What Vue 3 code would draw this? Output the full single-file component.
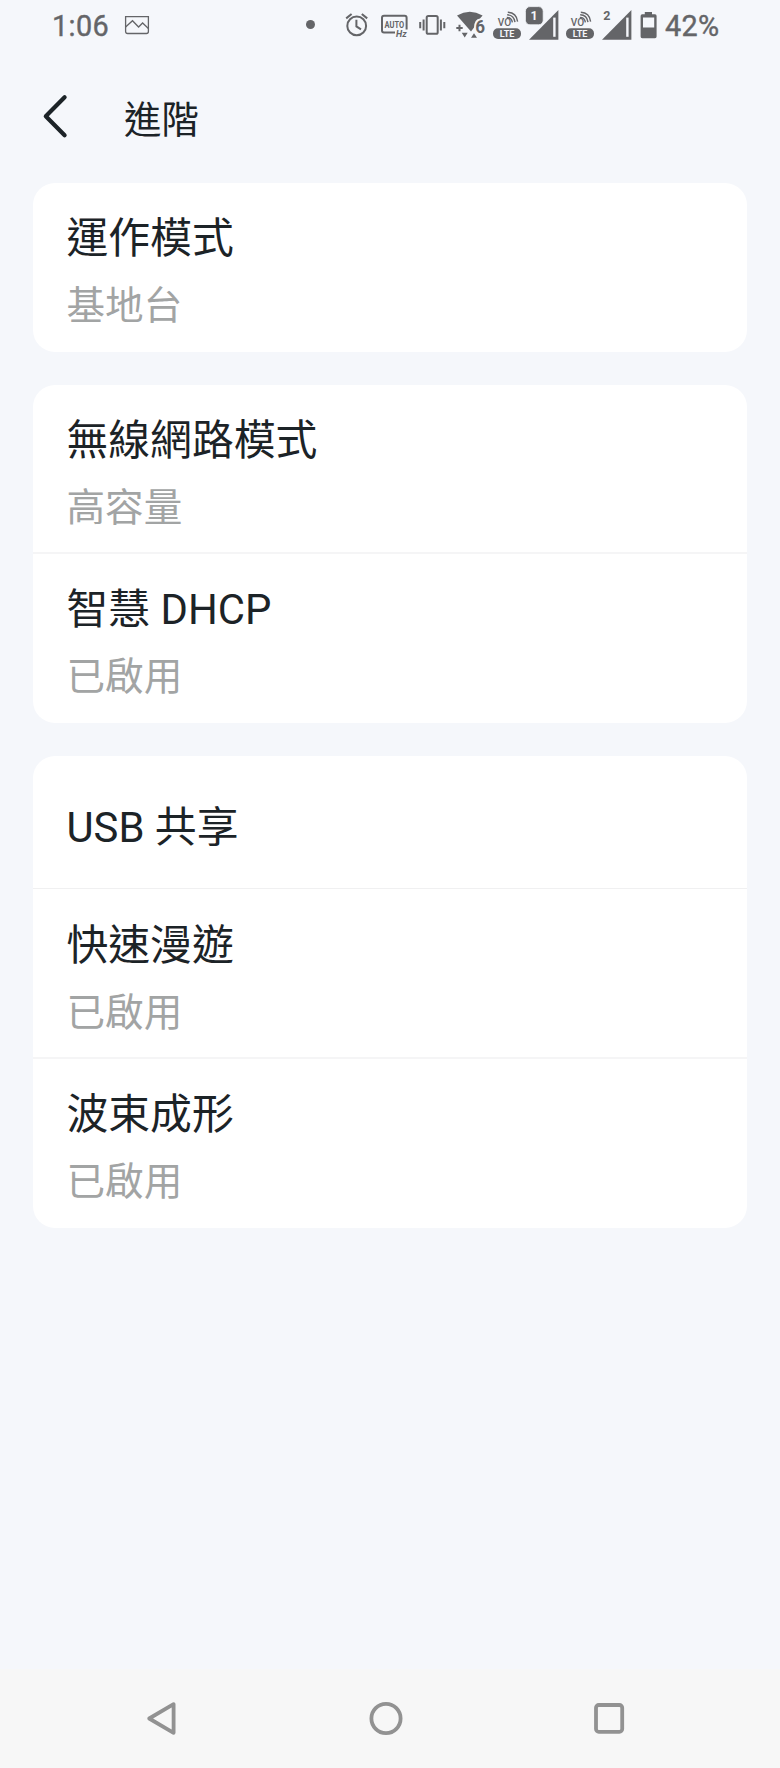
<template>
  <div class="screen">
    <div class="status-bar">
      <span class="clock">1:06</span>
      <svg class="icon-image" width="26" height="46" viewBox="0 0 26 46">
        <path d="M1.6 16.6H24.4V31.5Q24.4 33.5 22.4 33.5H3.6Q1.6 33.5 1.6 31.5Z" />
        <path d="M1.6 27L8.5 20.7L14.6 27L18.6 23L24.4 28.5" />
      </svg>

      <div class="status-icons">
        <svg width="13" height="46" viewBox="0 0 13 46"><circle class="fill" cx="6.5" cy="24.5" r="4.5" /></svg>

        <svg class="icon-alarm" width="26" height="46" viewBox="0 0 26 46">
          <g class="line">
            <circle cx="12.7" cy="25.9" r="9.4" />
            <path d="M12.4 19.8V26.4L17 29.4" />
            <path d="M2.2 18.4L7.6 14M23.2 18.4L17.8 14" />
          </g>
        </svg>

        <svg class="icon-auto" width="29" height="46" viewBox="0 0 29 46">
          <path class="line" d="M15 32.6H4Q2 32.6 2 30.6V17.8Q2 15.8 4 15.8H24.6Q26.6 15.8 26.6 17.8V29.5" />
          <text x="4.6" y="27.8" font-size="9.4" font-weight="700" textLength="19.6" lengthAdjust="spacingAndGlyphs">AUTO</text>
          <text x="16" y="37" font-size="9" font-weight="700" font-style="italic">Hz</text>
        </svg>

        <svg class="icon-vibrate" width="28" height="46" viewBox="0 0 28 46">
          <rect class="line" x="8.7" y="16" width="11" height="17.8" rx="1.6" />
          <path class="line" d="M5.6 19.5V30.5M2.2 22V28.2M22.9 19.5V30.5M26.3 22V28.2" />
        </svg>

        <svg class="icon-wifi" width="30" height="46" viewBox="0 0 30 46">
          <path class="fill" d="M1 15.4Q13.8 8 26.6 15.4L24 18.6Q18.4 19.4 18 27.4L15 31.4Z" />
          <path class="line" d="M3.5 24.8V31.2M.3 28H6.7" />
          <path class="fill" d="M5.7 32.8H11.7L8.7 37.4ZM15 37.8H21L18 33.2Z" />
          <text class="wifi-six" x="19.2" y="32.5" font-size="18.8" font-weight="700" textLength="9.8" lengthAdjust="spacingAndGlyphs">6</text>
        </svg>

        <template v-for="sim in sims" :key="sim">
          <svg class="icon-volte" width="30" height="46" viewBox="0 0 30 46">
            <text x="5.8" y="25.6" font-size="11" font-weight="500" textLength="13.4" lengthAdjust="spacingAndGlyphs">VO</text>
            <path class="wave" d="M14.8 17.4Q19.5 17.4 20.4 22.3M15.2 14.8Q21.9 14.9 23 22.1M15.8 12.2Q24.5 12.5 25.6 21.6" />
            <rect class="fill" x="1" y="28.2" width="28" height="10.8" rx="5" />
            <text class="knockout" x="7.8" y="36.9" font-size="9.4" font-weight="700" textLength="14.6" lengthAdjust="spacingAndGlyphs">LTE</text>
          </svg>
          <svg class="icon-signal" width="34" height="46" viewBox="0 0 34 46">
            <path class="fill" d="M4 39.8L33.4 10V39.8Z" />
            <path class="slot" d="M29.4 17.6V36.8" />
            <template v-if="sim === 1">
              <rect class="badge" x=".4" y="6.6" width="17.8" height="18.2" rx="4.6" />
              <text class="knockout" x="5.6" y="20.2" font-size="12.5" font-weight="700">1</text>
            </template>
            <text v-else x="5.3" y="20.2" font-size="12.5" font-weight="700">2</text>
          </svg>
        </template>

        <svg class="icon-battery" width="17" height="46" viewBox="0 0 17 46">
          <path class="fill" fill-rule="evenodd" d="M4.8 12H12V14.3H15Q16.6 14.3 16.6 15.9V36.6Q16.6 38.2 15 38.2H2.2Q.6 38.2 .6 36.6V15.9Q.6 14.3 2.2 14.3H4.8ZM3 17.6V27.6H14.2V17.6Z" />
        </svg>
        <span class="percent">42%</span>
      </div>
    </div>

    <header class="title-bar">
      <svg width="28" height="46" viewBox="0 0 28 46">
        <path d="M23.6 3.2L4.8 22.2L23.6 41.2" />
      </svg>
      <h1>進階</h1>
    </header>

    <main class="groups">
      <section v-for="(group, i) in groups" :key="i" class="card">
        <div v-for="item in group" :key="item.title" class="row" :class="{ single: !item.value }">
          <div class="row-title">{{ item.title }}</div>
          <div v-if="item.value" class="row-value">{{ item.value }}</div>
        </div>
      </section>
    </main>

    <nav class="nav-bar">
      <svg width="36" height="40" viewBox="0 0 36 40"><path d="M29.6 6.2V34.8L5.2 20.5Z" /></svg>
      <svg width="36" height="40" viewBox="0 0 36 40"><circle cx="18" cy="20.5" r="14.6" /></svg>
      <svg width="36" height="40" viewBox="0 0 36 40"><rect x="5" y="7" width="26.2" height="26.8" rx="2.8" /></svg>
    </nav>
  </div>
</template>

<script setup>
const sims = [1, 2]

const groups = [
  [{ title: '運作模式', value: '基地台' }],
  [
    { title: '無線網路模式', value: '高容量' },
    { title: '智慧 DHCP', value: '已啟用' },
  ],
  [
    { title: 'USB 共享' },
    { title: '快速漫遊', value: '已啟用' },
    { title: '波束成形', value: '已啟用' },
  ],
]
</script>

<style>
body { margin: 0; background: #f5f7fb; }
</style>

<style scoped>
.screen {
  display: flex;
  flex-direction: column;
  width: 780px;
  height: 1768px;
  background: #f5f7fb;
  color: #1c2327;
  font-family: Roboto, "Noto Sans CJK TC", sans-serif;
}
svg { display: block; flex: none; }

.status-bar {
  display: flex;
  height: 50px;
  padding: 0 0 0 52px;
  color: #646568;
}
.clock, .percent {
  height: 53px;
  line-height: 53px;
  font-size: 28.8px;
  -webkit-text-stroke: 0.4px currentColor;
}
.clock { width: 72px; letter-spacing: 0.4px; }
.percent { margin-left: 8px; letter-spacing: 0.3px; }
.icon-image { fill: none; stroke: currentColor; stroke-width: 1.3; }
.status-icons { display: flex; margin-left: 154px; }
.status-icons text { fill: currentColor; }
.status-icons .knockout { fill: #f5f7fb; }
.fill { fill: currentColor; }
.line { fill: none; stroke: currentColor; stroke-width: 2; }
.wave { fill: none; stroke: currentColor; stroke-width: 1.4; }
.wifi-six { stroke: #f5f7fb; stroke-width: 1.2; paint-order: stroke; }
.slot { stroke: #f5f7fb; stroke-width: 2.4; }
.badge { fill: currentColor; stroke: #f5f7fb; stroke-width: 0.8; }
.icon-alarm { margin-left: 27px; }
.icon-auto { margin-left: 10px; }
.icon-vibrate { margin-left: 9px; }
.icon-wifi { margin-left: 10px; }
.icon-volte { margin-left: 6px; }
.icon-signal { margin-left: 3px; }
.icon-battery { margin-left: 8px; }

.title-bar {
  display: flex;
  align-items: center;
  gap: 55px;
  height: 133px;
  padding-left: 41px;
  box-sizing: border-box;
}
.title-bar svg {
  fill: none;
  stroke: #1c2327;
  stroke-width: 4.2;
  stroke-linecap: round;
  stroke-linejoin: round;
}
.title-bar h1 {
  margin: 7px 0 0;
  font-size: 37.5px;
  font-weight: 400;
  line-height: 60px;
}

.groups {
  display: flex;
  flex: 1;
  flex-direction: column;
  gap: 33px;
  padding: 0 33px;
}
.card { overflow: hidden; border-radius: 22px; background: #fff; }
.row {
  box-sizing: border-box;
  height: 169px;
  padding: 26px 34px 0 33.5px;
}
.row:not(:last-child) { border-bottom: 2px solid #f5f5f6; }
.row.single { height: 133px; padding-top: 42px; border-bottom-width: 1px; border-bottom-color: #f0f0f1; }
.row.single + .row { height: 170px; padding-top: 27px; }
.row-title { font-size: 41.8px; line-height: 60px; }
.row-value { margin-top: 8px; color: #a2a4a4; font-size: 38.6px; line-height: 58px; }

.nav-bar {
  display: flex;
  justify-content: space-between;
  height: 99px;
  padding: 29px 153px 0 144px;
  box-sizing: border-box;
  background: #f7f7f7;
}
.nav-bar svg { fill: none; stroke: #929292; stroke-width: 3.8; stroke-linejoin: round; }
</style>
